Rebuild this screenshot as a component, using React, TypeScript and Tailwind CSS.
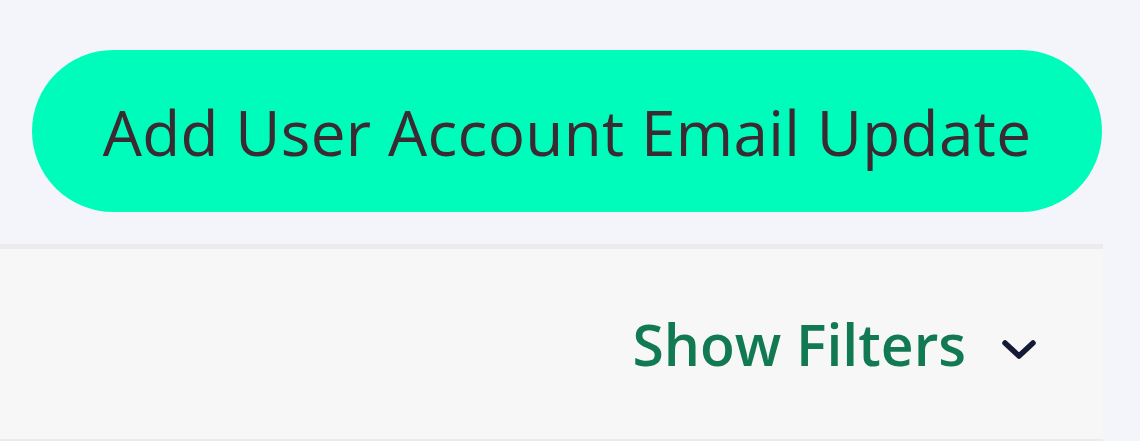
import React from 'react';

export default function App() {
  return (
    <div
      className="w-[1140px] h-[441px] bg-[#f4f5fa] flex flex-col overflow-hidden"
      style={{ fontFamily: '"Open Sans", "Liberation Sans", sans-serif' }}
    >
      <div className="pt-[50px] pl-[32px] pr-[38px] pb-[32px]">
        <button className="w-full h-[162px] rounded-full bg-[#00fcbb] text-[#3a2b33] text-[62px] tracking-[0.35px] flex items-center justify-center pt-[3px]">
          Add User Account Email Update
        </button>
      </div>
      <div className="w-[1103px] flex-1 bg-[#f7f7f8] border-t-[5px] border-b-2 border-[#ebebed] flex items-center justify-end pr-[66px] pt-[2px]">
        <button className="flex items-center gap-[35px] text-[#127a52] text-[57px] font-semibold">
          <span>Show Filters</span>
          <svg width="36" height="26" viewBox="0 0 36 26" fill="none" className="mt-[10px]">
            <path d="M4 6l14 13L32 6" stroke="#141a36" strokeWidth="5.5" strokeLinecap="round" strokeLinejoin="round" />
          </svg>
        </button>
      </div>
    </div>
  );
}
